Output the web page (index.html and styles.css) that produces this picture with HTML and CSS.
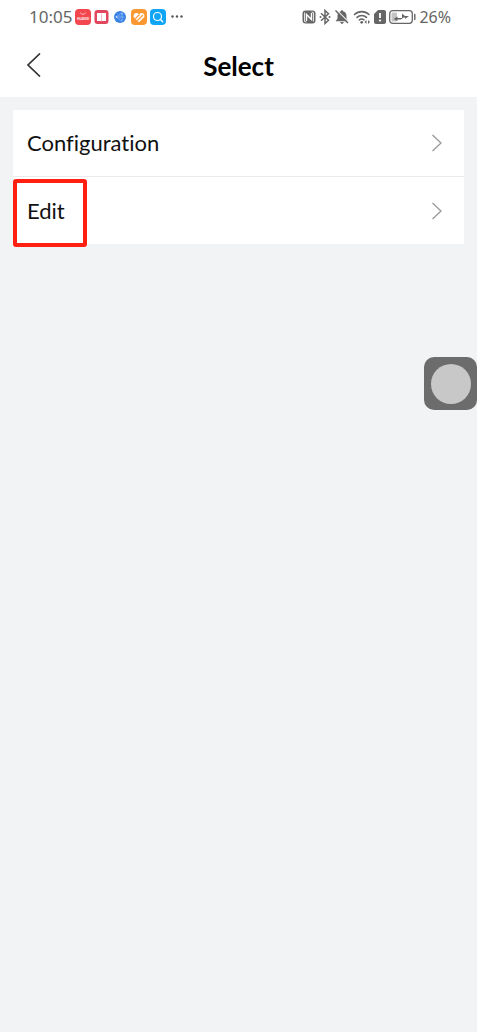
FILE: index.html
```html
<!DOCTYPE html>
<html lang="en">
<head>
  <meta charset="UTF-8">
  <title>Select</title>
  <meta name="viewport" content="width=device-width, initial-scale=1.0">
  <link rel="stylesheet" href="styles.css">
</head>
<body>
  <div class="status-bar">
    <div class="status-group">
      <span class="time">10:05</span>
      <svg width="16" height="16" viewBox="0 0 16 16">
        <rect width="16" height="16" rx="4" fill="#f2474f"/>
        <path d="M5.500 3.500a2.600 2.600 0 0 0 5 0" fill="none" stroke="#fbb" stroke-width="1"/>
        <text x="8" y="10.500" font-size="3" font-weight="bold" text-anchor="middle" fill="#fff">HUAWEI</text>
      </svg>
      <svg width="15" height="16" viewBox="0 0 15 16">
        <rect x="0.500" y="1" width="14" height="14" rx="3" fill="#e0475c"/>
        <path d="M3 4h4l.5.5.5-.5h4v8H8l-.5.5-.5-.5H3z" fill="#fff"/>
        <path d="M7.500 5v7" stroke="#f3aab4" stroke-width="0.800"/>
      </svg>
      <svg width="16" height="16" viewBox="0 0 16 16">
        <circle cx="8" cy="8" r="6" fill="#3b82e6"/>
        <path d="M4 8l6-4v8zM4 8h8" fill="none" stroke="#8fbcf7" stroke-width="0.700"/>
        <circle cx="4.500" cy="8" r="1" fill="#b4d2fb"/>
        <circle cx="10" cy="4.500" r="0.900" fill="#8fbcf7"/>
      </svg>
      <svg width="16" height="16" viewBox="0 0 16 16">
        <rect width="16" height="16" rx="4" fill="#fb9832"/>
        <path d="M8 13.200L3.200 8.600C1.200 6.300 4 2.600 6.900 4.400L8 5.300l1.100-.9c2.900-1.800 5.700 1.900 3.700 4.200z" fill="#fff"/>
        <path d="M4.500 9.500l4-4M6.500 11.500l5.500-5.500" stroke="#fb9832" stroke-width="1.100"/>
      </svg>
      <svg width="16" height="16" viewBox="0 0 16 16">
        <rect width="16" height="16" rx="4" fill="#10a5f5"/>
        <circle cx="7.500" cy="7.500" r="4" fill="none" stroke="#fff" stroke-width="1.200"/>
        <path d="M10.500 10.500l2.200 2.200" stroke="#fff" stroke-width="1.400" stroke-linecap="round"/>
      </svg>
      <svg width="16" height="16" viewBox="0 0 16 16" fill="#555">
        <circle cx="3.500" cy="7.500" r="1.200"/>
        <circle cx="8" cy="7.500" r="1.200"/>
        <circle cx="12.500" cy="7.500" r="1.200"/>
      </svg>
    </div>
    <div class="status-group status-right">
      <svg width="14" height="16" viewBox="0 0 14 16">
        <rect x="0.500" y="1.500" width="13" height="13" rx="3" fill="#666"/>
        <path d="M4.500 12V5.500l5 5V4" fill="none" stroke="#fff" stroke-width="1.400"/>
        <path d="M2.500 3.500v9l2 .5M11.500 12.500v-9l-2-.5" fill="none" stroke="#fff" stroke-width="0.800"/>
      </svg>
      <svg width="12" height="16" viewBox="0 0 12 16">
        <path d="M2 4.300l7.500 7L6 14.500v-13l3.500 3.200-7.500 7" fill="none" stroke="#666" stroke-width="1.500"/>
        <circle cx="1.500" cy="8" r="1" fill="#666"/>
        <circle cx="10.500" cy="8" r="1" fill="#666"/>
      </svg>
      <svg width="16" height="16" viewBox="0 0 16 16">
        <path d="M8 1.200c.8 0 1.100.5 1.100 1.100C11.700 2.900 12.500 5 12.500 7v2.500l1.800 2.700H1.700l1.800-2.700V7c0-2 .8-4.100 3.400-4.700 0-.6.3-1.100 1.100-1.100zM6.200 13h3.600c-.2 1.200-.9 1.800-1.800 1.800s-1.600-.6-1.800-1.800z" fill="#666"/>
        <path d="M2.500 1l12.500 12.500" stroke="#fff" stroke-width="1.100"/>
        <path d="M1.500 1.500l12.500 12.500" stroke="#666" stroke-width="1.500"/>
      </svg>
      <svg width="18" height="16" viewBox="0 0 18 16">
        <path d="M1.500 5.500a10.500 10.500 0 0 1 14.500 0M4 8.400a7 7 0 0 1 9.500 0M6.300 11a3.800 3.800 0 0 1 4.700-.2" fill="none" stroke="#666" stroke-width="1.600" stroke-linecap="round"/>
        <circle cx="8.700" cy="13.300" r="1.400" fill="#666"/>
        <path d="M11.500 13l2-2v4zM17 13l-2-2v4z" fill="#666"/>
      </svg>
      <svg width="12" height="16" viewBox="0 0 12 16">
        <path d="M4 1h6a2 2 0 0 1 2 2v10a2 2 0 0 1-2 2H2a2 2 0 0 1-2-2V5z" fill="#666"/>
        <path d="M6 4v5" stroke="#fff" stroke-width="1.800"/>
        <circle cx="6" cy="11.500" r="1.100" fill="#fff"/>
      </svg>
      <svg class="battery" width="27" height="16" viewBox="0 0 27 16">
        <rect x="0.700" y="1.700" width="22.600" height="12.600" rx="3" fill="none" stroke="#666" stroke-width="1.300"/>
        <rect x="2.500" y="3.500" width="5.500" height="9" rx="1" fill="#c4c4c4"/>
        <path d="M4.500 10l4-2.500V9h4.500V4.500L16 7h4l-4 3V8.500h-1.500L12 10.500H8.500V12z" fill="#666"/>
        <path d="M25.800 5.500v5" stroke="#666" stroke-width="1.400" stroke-linecap="round"/>
      </svg>
      <span class="percent">26%</span>
    </div>
  </div>

  <header class="title-bar">
    <button class="back" aria-label="Back">
      <svg width="16" height="24" viewBox="0 0 16 24">
        <path d="M14 .5L2 12l12 11.500" fill="none" stroke="#333" stroke-width="1.700"/>
      </svg>
    </button>
    <h1>Select</h1>
  </header>

  <main class="content">
    <nav class="menu">
      <a class="menu-item" href="#configuration">
        <span>Configuration</span>
        <svg width="12" height="18" viewBox="0 0 12 18">
          <path d="M1.500 1l8.500 8-8.500 8" fill="none" stroke="#999" stroke-width="1.300"/>
        </svg>
      </a>
      <a class="menu-item" href="#edit">
        <span>Edit</span>
        <svg width="12" height="18" viewBox="0 0 12 18">
          <path d="M1.500 1l8.500 8-8.500 8" fill="none" stroke="#999" stroke-width="1.300"/>
        </svg>
        <span class="highlight"></span>
      </a>
    </nav>
  </main>

  <button class="float-button" aria-label="Navigation"></button>
</body>
</html>
```
FILE: styles.css
```css
* {
  box-sizing: border-box;
  margin: 0;
  padding: 0;
}

body {
  font-family: Lato, "Noto Sans", sans-serif;
  font-variant-ligatures: none;
  background: #f1f3f5;
  color: #111;
  min-height: 100vh;
}

.status-bar {
  display: flex;
  justify-content: space-between;
  height: 34px;
  padding: 0 26px 0 29px;
  background: #fff;
  color: #666;
}

.status-group {
  display: flex;
  align-items: center;
  gap: 3px;
}

.time,
.percent {
  font-family: "Noto Sans", sans-serif;
  font-size: 16px;
  line-height: 20px;
}

.time {
  font-size: 17px;
}

.title-bar {
  display: grid;
  grid-template-columns: 48px 1fr 48px;
  align-items: center;
  height: 63px;
  padding: 0 13px;
  background: #fff;
}

.back {
  display: flex;
  align-items: center;
  height: 48px;
  padding: 0 0 2px 13px;
  background: transparent;
  border: none;
  cursor: pointer;
}

.title-bar h1 {
  font-size: 26px;
  line-height: 32px;
  font-weight: bold;
  text-align: center;
  color: #000;
}

.content {
  padding: 13px;
}

.menu {
  background: #fff;
}

.menu-item {
  position: relative;
  display: flex;
  justify-content: space-between;
  align-items: center;
  height: 67px;
  padding: 0 21px 0 14px;
  font-size: 22px;
  line-height: 28px;
  color: #111;
  text-decoration: none;
}

.menu-item:first-child {
  border-bottom: 1px solid #ebebed;
}

/* red frame round the selected entry */
.highlight {
  position: absolute;
  top: 2px;
  left: 0;
  width: 74px;
  height: 68px;
  border: 4px solid #ff2012;
  border-radius: 3px;
}

.float-button {
  position: fixed;
  top: 357px;
  right: 0;
  width: 53px;
  height: 53px;
  background: #6c6c6c;
  border: none;
  border-radius: 10px;
  cursor: pointer;
}

.float-button::before {
  content: "";
  display: block;
  width: 40px;
  height: 40px;
  margin: 0 auto;
  background: #c8c8c8;
  border-radius: 50%;
}
```
